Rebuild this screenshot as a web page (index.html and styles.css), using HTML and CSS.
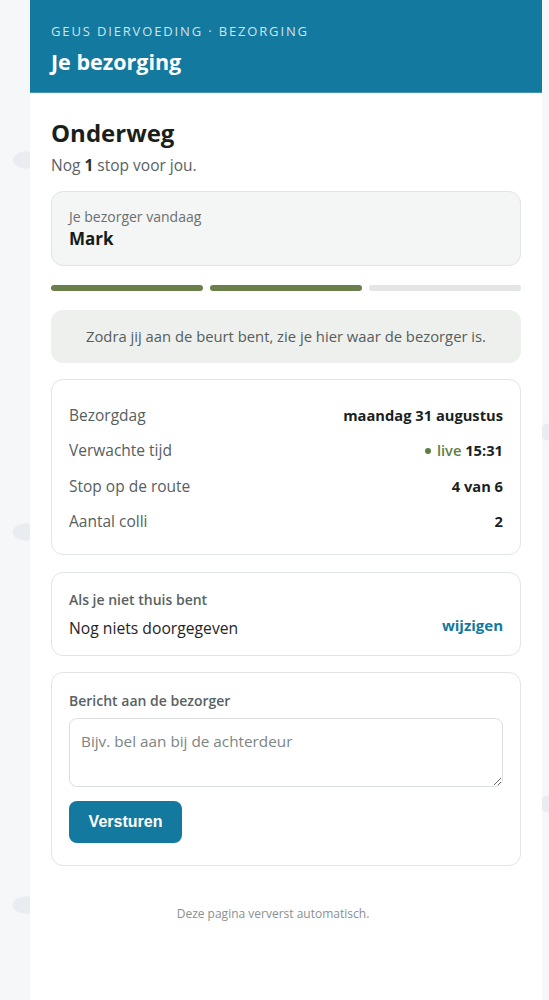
FILE: index.html
```html
<!DOCTYPE html>
<html lang="nl">
<head>
<meta charset="utf-8">
<title>Je bezorging</title>
<link rel="stylesheet" href="styles.css">
</head>
<body>
<div class="page">
  <header class="top">
    <div class="brand">GEUS DIERVOEDING · BEZORGING</div>
    <h1 class="title">Je bezorging</h1>
  </header>
  <main class="content">
    <h2 class="status">Onderweg</h2>
    <p class="sub">Nog <b>1</b> stop voor jou.</p>

    <div class="driver">
      <div class="driver-label">Je bezorger vandaag</div>
      <div class="driver-name">Mark</div>
    </div>

    <div class="progress">
      <span class="seg done"></span>
      <span class="seg done"></span>
      <span class="seg"></span>
    </div>

    <div class="notice">Zodra jij aan de beurt bent, zie je hier waar de bezorger is.</div>

    <div class="card details">
      <div class="row"><span class="lbl">Bezorgdag</span><span class="val">maandag 31 augustus</span></div>
      <div class="row"><span class="lbl">Verwachte tijd</span><span class="val"><span class="live"><span class="dot"></span>live</span> 15:31</span></div>
      <div class="row"><span class="lbl">Stop op de route</span><span class="val">4 van 6</span></div>
      <div class="row"><span class="lbl">Aantal colli</span><span class="val">2</span></div>
    </div>

    <div class="card away">
      <div class="away-text">
        <div class="card-label">Als je niet thuis bent</div>
        <div class="away-value">Nog niets doorgegeven</div>
      </div>
      <a class="link" href="#">wijzigen</a>
    </div>

    <div class="card message">
      <div class="card-label">Bericht aan de bezorger</div>
      <textarea class="msg" placeholder="Bijv. bel aan bij de achterdeur"></textarea>
      <button class="btn" type="button">Versturen</button>
    </div>

    <p class="foot">Deze pagina ververst automatisch.</p>
  </main>
</div>
</body>
</html>
```

FILE: styles.css
```css
html, body {
  margin: 0;
  padding: 0;
}
body {
  background-color: #f5f7f9;
  background-image:
    radial-gradient(ellipse 14px 9px at 26px 160px, #e9edf1 90%, transparent 100%),
    radial-gradient(ellipse 14px 9px at 26px 532px, #e9edf1 90%, transparent 100%),
    radial-gradient(ellipse 14px 9px at 26px 905px, #e9edf1 90%, transparent 100%),
    radial-gradient(ellipse 10px 9px at 549px 432px, #e9edf1 90%, transparent 100%),
    radial-gradient(ellipse 10px 9px at 549px 804px, #e9edf1 90%, transparent 100%);
  background-repeat: no-repeat;
  font-family: "Open Sans", "Noto Sans", sans-serif;
  color: #1c2124;
  min-height: 1000px;
}
.page {
  margin-left: 30px;
  width: 512px;
  min-height: 1000px;
  background: #ffffff;
}
.top {
  background: #14799f;
  height: 93px;
  box-sizing: border-box;
  padding: 22px 21px 0;
  border-bottom: 1px solid #3f94b3;
}
.brand {
  font-size: 13px;
  letter-spacing: 1.85px;
  color: #cfe4ee;
  line-height: 18px;
}
.title {
  margin: 9px 0 0;
  font-size: 21.5px;
  font-weight: 700;
  color: #ffffff;
  line-height: 26px;
}
.content {
  padding: 24px 21px 40px;
  display: flex;
  flex-direction: column;
}
.status {
  margin: 0;
  font-size: 24px;
  font-weight: 700;
  line-height: 32px;
  color: #1a1f1c;
}
.sub {
  margin: 5px 0 0;
  font-size: 15.5px;
  color: #5a6262;
  line-height: 22px;
}
.sub b {
  color: #2a2f30;
}
.driver {
  margin-top: 15px;
  background: #f4f5f5;
  border: 1px solid #e2e5e5;
  border-radius: 12px;
  padding: 15px 17px 14px;
}
.driver-label {
  font-size: 14px;
  color: #6a7070;
  line-height: 19px;
}
.driver-name {
  font-size: 17px;
  font-weight: 700;
  color: #161b1b;
  line-height: 25px;
}
.progress {
  margin-top: 19px;
  display: flex;
  gap: 7px;
}
.seg {
  flex: 1;
  height: 6px;
  border-radius: 3px;
  background: #e4e6e5;
}
.seg.done {
  background: #6a7f4b;
}
.notice {
  margin-top: 19px;
  background: #eef0ee;
  border-radius: 12px;
  padding: 16px 12px;
  text-align: center;
  font-size: 14.8px;
  line-height: 21px;
  color: #555d5b;
}
.card {
  border: 1px solid #e2e5e5;
  border-radius: 12px;
  background: #fff;
}
.details {
  margin-top: 16px;
  padding: 17px 17px 15px;
}
.row {
  display: flex;
  justify-content: space-between;
  align-items: center;
  height: 35.5px;
  font-size: 15.5px;
}
.lbl {
  color: #566060;
}
.val {
  font-weight: 700;
  color: #1a1f1f;
  font-size: 14.7px;
}
.live {
  color: #5f7e45;
  font-weight: 600;
}
.dot {
  display: inline-block;
  width: 6px;
  height: 6px;
  border-radius: 50%;
  background: #5f7e45;
  margin-right: 6px;
  vertical-align: 2px;
}
.away {
  margin-top: 17px;
  padding: 17px 17px 16px;
  display: flex;
  justify-content: space-between;
  align-items: flex-end;
}
.card-label {
  font-size: 14px;
  font-weight: 600;
  color: #596262;
  line-height: 19px;
}
.away-value {
  margin-top: 8px;
  font-size: 15.7px;
  color: #1f2424;
  line-height: 22px;
}
.link {
  font-size: 15px;
  font-weight: 700;
  color: #14799f;
  text-decoration: none;
  margin-bottom: 4px;
}
.message {
  margin-top: 16px;
  padding: 18px 17px 22px;
  display: flex;
  flex-direction: column;
  align-items: flex-start;
}
.msg {
  margin-top: 8px;
  box-sizing: border-box;
  width: 100%;
  height: 69px;
  border: 1px solid #dcdfdf;
  border-radius: 8px;
  padding: 12px 11px;
  font-family: "Open Sans", "Noto Sans", sans-serif;
  font-size: 15.3px;
  color: #1f2424;
  resize: vertical;
}
.msg::placeholder {
  color: #7d8484;
}
.btn {
  margin-top: 14px;
  background: #14799f;
  color: #fff;
  border: none;
  border-radius: 8px;
  height: 42px;
  width: 113px;
  font-family: "Liberation Sans", Arial, sans-serif;
  font-weight: 700;
  font-size: 16px;
}
.foot {
  margin: 39px 0 0;
  padding-right: 26px;
  text-align: center;
  font-size: 12px;
  color: #8a9090;
}
```
